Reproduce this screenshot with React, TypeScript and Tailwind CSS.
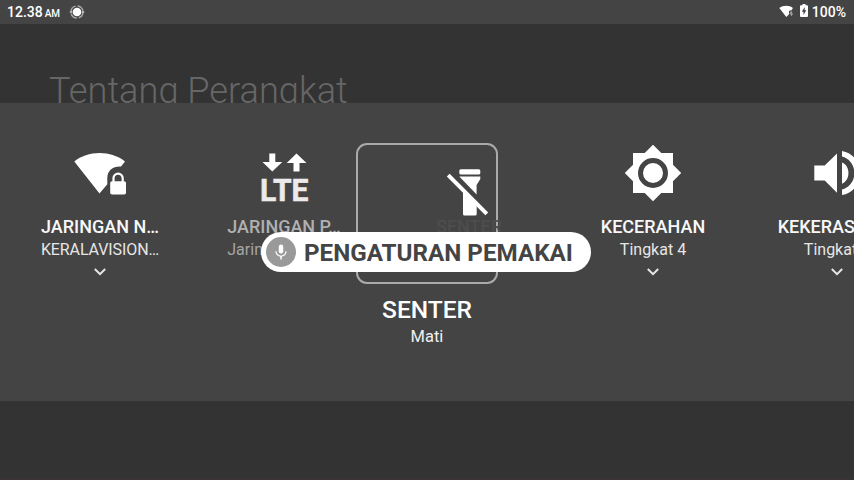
import React from "react";

function Chevron() {
  return (
    <svg className="mt-[7px] h-[8px] w-[12px]" viewBox="0 0 12 8" fill="none" stroke="#e6e6e6" strokeWidth="2">
      <path d="M.8 1 6 6.2 11.2 1" />
    </svg>
  );
}

function WifiLockIcon() {
  return (
    <svg className="h-[60px] w-[60px]" viewBox="70 143 60 60">
      <path
        fill="#fff"
        d="M74.3 161.5C81 156 90 153 99.500 153S118.500 156 125 161.500L121 166.500C113 166 107.300 170.500 107.300 178V184.300L99.500 193.500Z"
      />
      <rect x="110.200" y="181.300" width="15.800" height="13.200" rx="1.800" fill="#fff" />
      <path d="M113.500 182V178.200a4.600 4.600 0 0 1 9.200 0V182" fill="none" stroke="#fff" strokeWidth="2.200" />
    </svg>
  );
}

function LteIcon() {
  return (
    <svg className="h-[60px] w-[60px]" viewBox="254 143 60 60">
      <path fill="#fff" d="M269.300 153.500h6v8.500h7l-10 9.500-9.800-9.500h6.800ZM293.500 171.500v-8.500h-6.800l9.800-9.500 10 9.500h-7v8.500Z" />
      <text
        x="260"
        y="200.800"
        textLength="48.500"
        lengthAdjust="spacingAndGlyphs"
        fill="#ebebeb"
        stroke="#ebebeb"
        strokeWidth=".5"
        fontFamily="Roboto, sans-serif"
        fontWeight="700"
        fontSize="30.500"
      >
        LTE
      </text>
    </svg>
  );
}

function FlashlightOffIcon() {
  return (
    <svg className="absolute left-[88px] top-[22px] h-[52px] w-[44px]" viewBox="446 167 44 52">
      <rect x="459.300" y="169.300" width="21" height="5.200" rx="1.500" fill="#fff" />
      <path fill="#fff" d="M459.300 176.500h21v2.500l-3.700 6V194.500Z" />
      <path fill="#fff" d="M463 185.500 476.700 199v15a1.500 1.500 0 0 1-1.500 1.500h-10.700a1.500 1.500 0 0 1-1.500-1.500Z" />
      <path d="M450 173 489 212" stroke="#444" strokeWidth="4" />
      <path d="M448.200 175.200 486.800 213.800" stroke="#fff" strokeWidth="4" />
    </svg>
  );
}

function BrightnessIcon() {
  return (
    <svg className="h-[60px] w-[60px]" viewBox="623 143 60 60">
      <path fill="#fff" d="M653 144.800 661.300 153H673v11.700l8.200 8.300-8.200 8.300V193h-11.700l-8.300 8.200-8.300-8.200H633v-11.700l-8.200-8.300 8.200-8.300V153h11.700Z" />
      <circle cx="653" cy="173" r="12.500" fill="#fff" stroke="#444" strokeWidth="5" />
    </svg>
  );
}

function VolumeIcon() {
  return (
    <svg className="h-[60px] w-[60px]" viewBox="807 143 60 60">
      <path fill="#fff" d="M814.300 165.500h10.400L837 153.500v39.200l-12.300-12.200h-10.400ZM842 162.500c8.700 3.200 8.700 18 0 21.200Z" />
      <path fill="#fff" d="M842 151c24 4.500 24 39.500 0 44v-5.500c16.500-4.500 16.500-28.500 0-33Z" />
    </svg>
  );
}

type TileProps = {
  className: string;
  icon: React.ReactNode;
  title: string;
  value: string;
  tone?: string;
  titleClass?: string;
  valueClass?: string;
  expandable?: boolean;
};

function Tile({
  className,
  icon,
  title,
  value,
  tone = "text-[#f8f8f8]",
  titleClass = "",
  valueClass = "",
  expandable = true,
}: TileProps) {
  return (
    <div className={`flex shrink-0 flex-col items-center whitespace-nowrap pt-10 ${className}`}>
      {icon}
      <div className={`mt-[13px] text-[18px] font-medium leading-[22px] ${tone} ${titleClass}`}>{title}</div>
      <div className={`mt-px text-[16px] leading-[22px] opacity-90 ${tone} ${valueClass}`}>{value}</div>
      {expandable && <Chevron />}
    </div>
  );
}

function StatusBar() {
  return (
    <header className="flex h-6 items-center justify-between bg-[#444] pl-[7px] pr-2 text-[14px] font-medium text-white">
      <div className="flex items-center">
        <span>12.38</span>
        <span className="ml-[2px] pt-[3px] text-[10px] tracking-[-0.2px]">AM</span>
        <svg className="ml-[9px] h-[16px] w-[16px]" viewBox="0 0 16 16">
          <circle cx="8" cy="8" r="6" fill="none" stroke="#a5a5a5" strokeWidth="1.500" strokeDasharray="7.400 2" />
          <circle cx="8" cy="8" r="4.300" fill="#fff" />
          <path d="M.8 8h2.400M12.800 8h2.400" stroke="#ccc" strokeWidth="1.500" />
        </svg>
      </div>
      <div className="flex items-center">
        <svg className="mb-px h-[13px] w-[15px]" viewBox="0 0 15 13">
          <path fill="#fff" d="M.3 3C4.300-.1 10.300-.1 14 3L12.500 5 10 6v3.200L7.300 12Z" />
          <path d="M12.800 5.500 10.800 9H14M12.600 7v4" fill="none" stroke="#aaa" strokeWidth=".9" />
        </svg>
        <svg className="mb-[3px] ml-[6px] h-[13px] w-[8px]" viewBox="0 0 8 13">
          <path fill="#fff" d="M2.500 0h3v1.200H7a1 1 0 0 1 1 1V12a1 1 0 0 1-1 1H1a1 1 0 0 1-1-1V2.200a1 1 0 0 1 1-1h1.500Z" />
          <path fill="#444" d="M4.700 3 1.800 7.700h1.700V11l2.800-4.700H4.700Z" />
        </svg>
        <span className="ml-1">100%</span>
      </div>
    </header>
  );
}

export default function App() {
  return (
    <div className="relative flex h-[480px] w-[854px] flex-col overflow-hidden bg-[#333] font-['Roboto',sans-serif]">
      <StatusBar />
      <div className="h-[79px] overflow-hidden pl-[49px] pt-[44px]">
        <h1 className="whitespace-nowrap text-[36.200px] font-light leading-[46px] text-[#666]">Tentang Perangkat</h1>
      </div>
      <main className="flex h-[298px] items-start overflow-hidden bg-[#444]">
        <Tile className="w-[200px]" icon={<WifiLockIcon />} title="JARINGAN N…" value="KERALAVISION…" valueClass="tracking-[-0.1px]" />
        <Tile
          className="ml-3 w-[144px]"
          icon={<LteIcon />}
          title="JARINGAN P…"
          value="Jaringan seluler"
          tone="text-[#b0b0b0]"
          expandable={false}
        />
        <section className="mt-10 flex w-[142px] shrink-0 flex-col items-center whitespace-nowrap text-white">
          <div className="relative h-[141px] w-[142px] rounded-[11px] border-2 border-[#aaa]">
            <FlashlightOffIcon />
            <span className="absolute left-[78px] top-[71px] text-[18px] font-medium leading-[22px] text-[#4d4d4d]">SENTER</span>
          </div>
          <div className="mt-3 text-[24.500px] font-medium leading-[28px]">SENTER</div>
          <div className="mt-[2px] text-[16.500px] leading-[22px] text-[#f0f0f0]">Mati</div>
        </section>
        <Tile className="ml-[63px] w-[184px]" icon={<BrightnessIcon />} title="KECERAHAN" value="Tingkat 4" />
        <Tile className="w-[184px]" icon={<VolumeIcon />} title="KEKERASAN…" value="Tingkat 7" titleClass="pr-1" />
      </main>
      <div className="mt-auto h-[2px] bg-[#3a3236]" />
      <div className="absolute left-[261px] top-[232px] flex h-10 w-[330px] items-center whitespace-nowrap rounded-full bg-white pl-[5px]">
        <span className="flex size-[30px] items-center justify-center rounded-full bg-[#999]">
          <svg className="h-[18px] w-[18px]" viewBox="0 0 24 24" fill="#fff">
            <path d="M12 14a3 3 0 0 0 3-3V5a3 3 0 0 0-6 0v6a3 3 0 0 0 3 3Z" />
            <path d="M17.900 11c0 3.300-2.600 5.700-5.900 5.700S6.100 14.300 6.100 11H4.500c0 3.700 2.900 6.700 6.500 7.200V22h2v-3.800c3.600-.5 6.500-3.500 6.500-7.200Z" />
          </svg>
        </span>
        <span className="ml-2 pt-[2px] text-[24.200px] font-bold text-[#444]">PENGATURAN PEMAKAI</span>
      </div>
    </div>
  );
}
